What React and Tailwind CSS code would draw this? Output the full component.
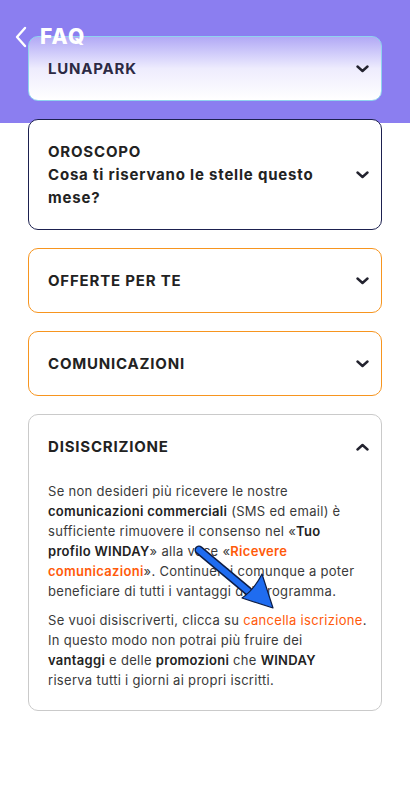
import { useState } from 'react';

const font = { fontFamily: 'Inter, "Noto Sans", sans-serif' };

// chevron giù / su
const Chevron = ({ up }) => (
  <svg width="13" height="8" viewBox="0 0 13 8" className={up ? 'rotate-180' : ''}>
    <path d="M1.5 1.5l5 4.5 5-4.5" fill="none" stroke="#23232f" strokeWidth="2.4" strokeLinecap="round" strokeLinejoin="round" />
  </svg>
);

const items = [
  { id: 'luna', title: ['LUNAPARK'], border: 'border-[#8fd3ee]', bg: 'bg-gradient-to-b from-[#b2a9f5] via-[#eeecfd] to-white', text: 'text-[#2c2a44]' },
  { id: 'oro', title: ['OROSCOPO', 'Cosa ti riservano le stelle questo mese?'], border: 'border-[#1d2150]', bg: 'bg-white', text: 'text-[#222]' },
  { id: 'off', title: ['OFFERTE PER TE'], border: 'border-[#f7951f]', bg: 'bg-white', text: 'text-[#222]' },
  { id: 'com', title: ['COMUNICAZIONI'], border: 'border-[#f7951f]', bg: 'bg-white', text: 'text-[#222]' },
];

const B = ({ children }) => <b className="font-semibold text-[#222]">{children}</b>;

export default function App() {
  const [open, setOpen] = useState('dis');

  return (
    <div className="relative min-h-[785px] w-[410px] bg-white overflow-hidden" style={font}>
      {/* HEADER */}
      <div className="h-[123px] bg-[#8b7ef0]">
        <div className="relative z-10 flex items-center pl-[14px] pt-[25px] gap-[12px]">
          <svg width="14" height="22" viewBox="0 0 14 22">
            <path d="M11 2L3 11l8 9" fill="none" stroke="white" strokeWidth="2.4" strokeLinecap="round" strokeLinejoin="round" />
          </svg>
          <span className="text-white text-[21px] font-extrabold leading-[24px] tracking-[1.2px]">FAQ</span>
        </div>
      </div>

      {/* LISTA */}
      <div className="-mt-[87px] px-[28px] flex flex-col gap-[18px]">
        {items.map(it => (
          <button
            key={it.id}
            onClick={() => setOpen(open === it.id ? null : it.id)}
            className={`w-full rounded-[10px] border ${it.border} ${it.bg} pl-[19px] pr-[12px] py-[20px] flex items-center justify-between text-left`}
          >
            <div className={`${it.text} text-[15px] font-bold leading-[23px] tracking-[0.8px] pr-[30px]`}>
              {it.title.map((t, i) => <div key={i}>{t}</div>)}
            </div>
            <div className="shrink-0"><Chevron /></div>
          </button>
        ))}

        {/* DISISCRIZIONE aperta */}
        <div className="rounded-[10px] border border-[#cacaca] bg-white pl-[19px] pr-[12px] py-[20px]">
          <div className="flex items-center justify-between">
            <div className="text-[#222] text-[15px] font-bold leading-[23px] tracking-[0.8px]">DISISCRIZIONE</div>
            <div><Chevron up /></div>
          </div>
          <div className="mt-[23px] text-[13px] leading-[20px] tracking-[0.3px] text-[#3a3a3a] whitespace-nowrap">
            <p>
              Se non desideri più ricevere le nostre<br />
              <B>comunicazioni commerciali</B> (SMS ed email) è<br />
              sufficiente rimuovere il consenso nel «<B>Tuo</B><br />
              <B>profilo WINDAY</B>» alla voce «<b className="font-semibold text-[#ff5a0a]">Ricevere</b><br />
              <b className="font-semibold text-[#ff5a0a]">comunicazioni</b>». Continuerai comunque a poter<br />
              beneficiare di tutti i vantaggi del programma.
            </p>
            <p className="mt-[9px]">
              Se vuoi disiscriverti, clicca su <span className="text-[#ff5a0a]">cancella iscrizione</span>.<br />
              In questo modo non potrai più fruire dei<br />
              <B>vantaggi</B> e delle <B>promozioni</B> che <B>WINDAY</B><br />
              riserva tutti i giorni ai propri iscritti.
            </p>
          </div>
        </div>
      </div>

      {/* freccia di annotazione */}
      <svg className="absolute left-0 top-0 pointer-events-none" width="410" height="785">
        <line x1="199" y1="550" x2="248" y2="591" stroke="#0d1d45" strokeWidth="9" strokeLinecap="round" />
        <line x1="199" y1="550" x2="248" y2="591" stroke="#1f6cf0" strokeWidth="6" strokeLinecap="round" />
        <path d="M242 598 Q254 590 262 574 L273 608 Z" fill="#1f6cf0" stroke="#0d1d45" strokeWidth="1.2" strokeLinejoin="round" />
      </svg>
    </div>
  );
}
